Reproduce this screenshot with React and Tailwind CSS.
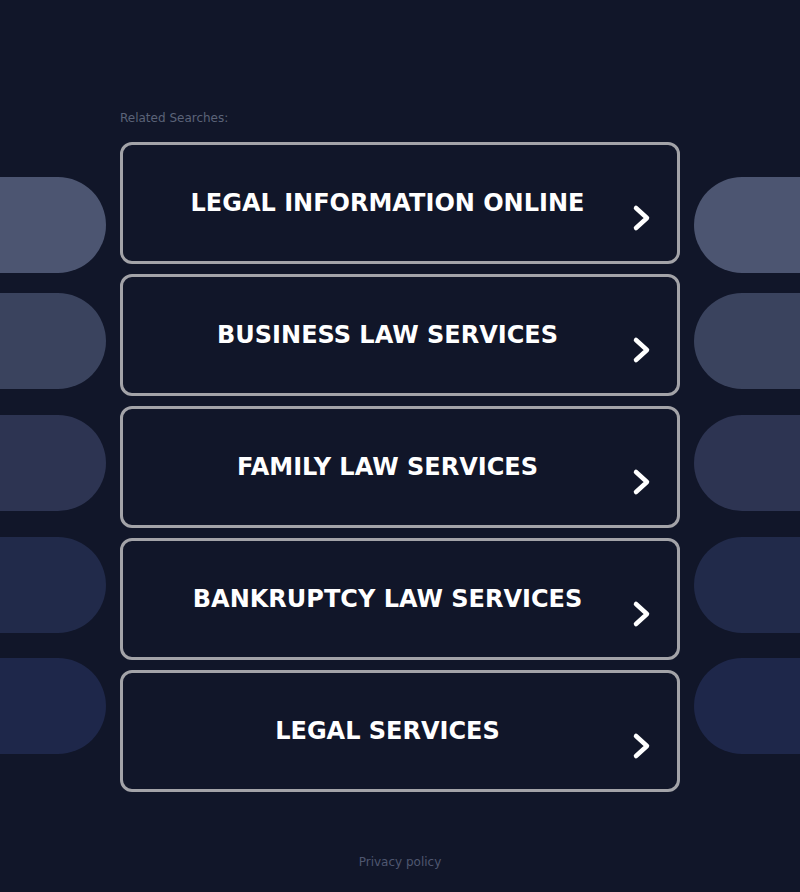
import React from 'react';

const searches = [
  'LEGAL INFORMATION ONLINE',
  'BUSINESS LAW SERVICES',
  'FAMILY LAW SERVICES',
  'BANKRUPTCY LAW SERVICES',
  'LEGAL SERVICES',
];

const pills = [
  { color: 'bg-[#4c5571]', mt: 'mt-0' },
  { color: 'bg-[#3a435e]', mt: 'mt-[20px]' },
  { color: 'bg-[#2d3452]', mt: 'mt-[26px]' },
  { color: 'bg-[#212a4a]', mt: 'mt-[26px]' },
  { color: 'bg-[#1e274a]', mt: 'mt-[25px]' },
];

const Chevron = () => (
  <svg
    className="absolute right-[24px] top-[59px]"
    width="22"
    height="28"
    viewBox="0 0 22 28"
    fill="none"
  >
    <path
      d="M5 4 L16 14 L5 24"
      stroke="#ffffff"
      strokeWidth="4.5"
      strokeLinecap="round"
      strokeLinejoin="round"
    />
  </svg>
);

const App = () => {
  return (
    <div
      className="min-h-[892px] w-[800px] overflow-hidden bg-[#111629] flex flex-col"
      style={{ fontFamily: '"DejaVu Sans", Verdana, sans-serif' }}
    >
      <div className="flex gap-[14px]">
        {/* left decoration */}
        <div className="w-[106px] pt-[177px] flex flex-col">
          {pills.map((p, i) => (
            <div key={i} className={`${p.color} ${p.mt} h-[96px] w-full rounded-r-[48px]`} />
          ))}
        </div>

        {/* results */}
        <div className="w-[560px] pt-[110px]">
          <div className="text-[12px] leading-[16px] text-[#5b6378] mb-[16px]">Related Searches:</div>
          <div className="flex flex-col gap-[10px]">
            {searches.map(s => (
              <a
                key={s}
                href="#"
                className="relative h-[122px] border-[3px] border-[#a3a3a8] rounded-[12px] flex items-center"
              >
                <span className="w-full pr-[25px] text-center text-white text-[24px] font-bold">
                  {s}
                </span>
                <Chevron />
              </a>
            ))}
          </div>
        </div>

        {/* right decoration */}
        <div className="w-[106px] pt-[177px] flex flex-col">
          {pills.map((p, i) => (
            <div key={i} className={`${p.color} ${p.mt} h-[96px] w-full rounded-l-[48px]`} />
          ))}
        </div>
      </div>

      <div className="mt-[62px] text-center text-[12px] leading-[16px] text-[#4f5670]">
        Privacy policy
      </div>
    </div>
  );
};

export default App;
